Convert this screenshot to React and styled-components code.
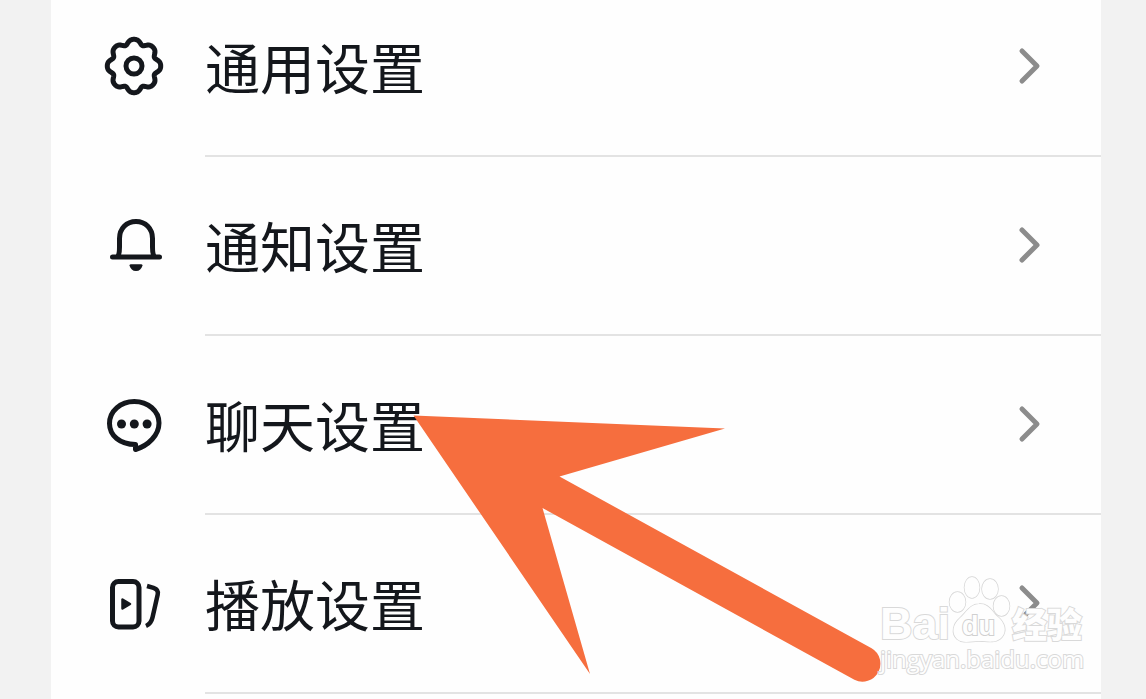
import React from "react";
import styled, { createGlobalStyle } from "styled-components";

const GlobalStyle = createGlobalStyle`
  * { box-sizing: border-box; }
  body {
    margin: 0;
    background: #f2f2f2;
    color: #14171c;
    font-family: "Noto Sans CJK SC", "Liberation Sans", sans-serif;
  }
`;

const Page = styled.main`
  position: relative;
  min-height: 100vh;
  padding: 0 45px 0 51px;
  overflow: hidden;
  display: flex;
`;

const Card = styled.div`
  flex: 1;
  min-width: 0;
  background: #fefefe;
`;

const List = styled.ul`
  list-style: none;
  margin: -22px 0 0;
  padding: 0;
`;

const Row = styled.button`
  display: flex;
  align-items: stretch;
  width: 100%;
  height: 179px;
  padding: 0 0 0 51px;
  border: 0;
  background: none;
  color: inherit;
  font: inherit;
  text-align: left;
  cursor: pointer;
`;

const IconSlot = styled.span`
  display: flex;
  align-items: center;
  width: 103px;
  padding-bottom: 3px;
`;

const RowBody = styled.span`
  flex: 1;
  display: flex;
  align-items: center;
  justify-content: space-between;
  padding-right: 59px;
  border-bottom: 2px solid #e3e3e3;
`;

const Label = styled.span`
  padding-bottom: 3px;
  font-size: 55px;
  line-height: 80px;
  white-space: nowrap;
`;

const Icon = styled.svg`
  display: block;
  flex: none;
  fill: none;
  stroke: currentColor;
  stroke-width: 5;
  stroke-linecap: round;
  stroke-linejoin: round;
`;

const Chevron = styled(Icon)`
  color: #8c8c8c;
`;

const Arrow = styled.svg`
  position: absolute;
  left: 413px;
  top: 415px;
  pointer-events: none;
`;

const Watermark = styled.div`
  position: absolute;
  right: 60px;
  top: 574px;
  width: 206px;
  color: #fefefe;
  -webkit-text-stroke: 2px #d9d9d9;
  paint-order: stroke fill;
  pointer-events: none;
`;

const Brand = styled.div`
  display: flex;
  align-items: flex-end;
  height: 70px;
`;

const BrandLatin = styled.span`
  width: 68px;
  font: bold 45px/40px "Liberation Sans", sans-serif;
`;

const BrandHan = styled.span`
  font: 900 35px/42px "Noto Sans CJK SC", sans-serif;
`;

const Paw = styled.svg`
  flex: none;
  fill: #fefefe;
  stroke: #d6d6d6;
  stroke-width: 1.5;
`;

const PawText = styled.text`
  font: bold 27px "Liberation Sans", sans-serif;
  stroke: #d0d0d0;
  stroke-width: 2;
  fill: #fefefe;
  -webkit-text-stroke: 0;
  paint-order: stroke fill;
`;

const Site = styled.div`
  font: 24px/30px "Open Sans", sans-serif;
  white-space: nowrap;
`;

const gearPath =
  Array.from({ length: 240 }, (_, i) => {
    const a = (i / 240) * Math.PI * 2;
    const r = 24.8 + 2.3 * Math.cos(8 * a) - 0.4 * Math.cos(16 * a);
    return `${i ? "L" : "M"}${(32 + r * Math.cos(a)).toFixed(2)} ${(32 + r * Math.sin(a)).toFixed(2)}`;
  }).join("") + "Z";

const GearIcon = () => (
  <Icon width="64" height="64" viewBox="0 0 64 64" aria-hidden="true">
    <path d={gearPath} />
    <circle cx="32" cy="32" r="8" />
  </Icon>
);

const BellIcon = () => (
  <Icon width="64" height="64" viewBox="0 0 64 64" aria-hidden="true">
    <path d="M10.5 44H57.5M16 43C17.5 41 17.5 38 17.5 34V25.5C17.5 15.5 24.5 8.5 34 8.5S50.5 15.5 50.5 25.5V34C50.5 38 50.5 41 52 43" />
    <path d="M27.5 52.5Q27.5 51.2 29 51.2H39Q40.5 51.2 40.5 52.5C39.5 56 37.5 58 34 58S28.5 56 27.5 52.5Z" fill="currentColor" stroke="none" />
  </Icon>
);

const ChatIcon = () => (
  <Icon width="64" height="64" viewBox="0 0 64 64" aria-hidden="true">
    <path d="M33.5 57.5V52.5C18 52.5 7.5 43.5 7.5 31.5C7.5 19 18.5 9.5 32.3 9.5S57 19 57 31C57 43 46.5 53.5 33.5 57.5Z" />
    <g fill="currentColor" stroke="none">
      <circle cx="19.5" cy="32" r="4.5" />
      <circle cx="32.3" cy="32" r="4.5" />
      <circle cx="45.1" cy="32" r="4.5" />
    </g>
  </Icon>
);

const PlayIcon = () => (
  <Icon width="64" height="64" viewBox="0 0 64 64" aria-hidden="true">
    <rect x="10.5" y="10.5" width="26.5" height="45.5" rx="6" />
    <path d="M20.5 28.5V37.5L28 33Z" fill="currentColor" strokeWidth="2.5" />
    <path d="M45 15L51.5 16.8C55 18 56.5 20 55.7 23.5L50.5 46.5C49.5 51 47.5 53.5 44 55" strokeWidth="4.5" strokeLinecap="butt" />
  </Icon>
);

const items = [
  { label: "通用设置", Glyph: GearIcon },
  { label: "通知设置", Glyph: BellIcon },
  { label: "聊天设置", Glyph: ChatIcon },
  { label: "播放设置", Glyph: PlayIcon },
];

function SettingRow({ label, Glyph }) {
  return (
    <li>
      <Row type="button">
        <IconSlot><Glyph /></IconSlot>
        <RowBody>
          <Label>{label}</Label>
          <Chevron width="24" height="40" viewBox="0 0 24 40" aria-hidden="true">
            <path d="M4 4L19 19L4 34" />
          </Chevron>
        </RowBody>
      </Row>
    </li>
  );
}

export default function App() {
  return (
    <>
      <GlobalStyle />
      <Page>
        <Card>
          <List>
            {items.map((item) => <SettingRow key={item.label} {...item} />)}
          </List>
        </Card>
        <Arrow width="470" height="270" viewBox="0 0 470 270" aria-hidden="true">
          <path d="M0.5 0.5L312 13.5L146.5 61.5L458.6 233.2A18 18 0 0 1 441.4 264.8L129.5 93L177 259Z" fill="#f66e3e" />
        </Arrow>
        <Watermark>
          <Brand>
            <BrandLatin>Bai</BrandLatin>
            <Paw width="64" height="70" viewBox="0 0 64 70" aria-hidden="true">
              <ellipse cx="9.5" cy="28" rx="8" ry="10" />
              <ellipse cx="24" cy="13.5" rx="7.5" ry="10.5" />
              <ellipse cx="42" cy="15" rx="8" ry="10" />
              <ellipse cx="53.5" cy="32" rx="8" ry="10" />
              <path d="M31 30C41 29 44 38 50 43C57 49 59 57 54 63C48 70 39 67 31 67S15 70 9 65C3 59 5 50 12 44C18 39 22 30 31 30Z" />
              <PawText x="14" y="61">du</PawText>
            </Paw>
            <BrandHan>经验</BrandHan>
          </Brand>
          <Site>jingyan.baidu.com</Site>
        </Watermark>
      </Page>
    </>
  );
}
